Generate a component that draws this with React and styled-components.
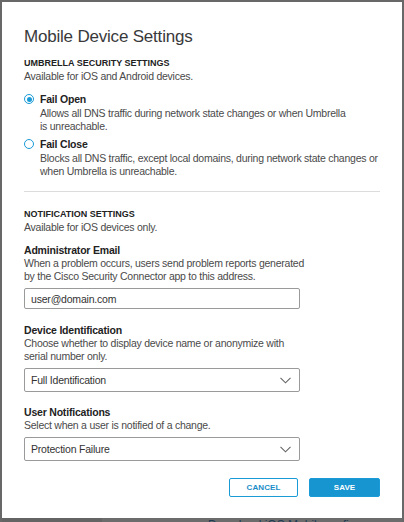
import React from 'react';
import styled, { createGlobalStyle } from 'styled-components';

const GlobalStyle = createGlobalStyle`
    * {
        margin: 0;
        padding: 0;
        box-sizing: border-box;
    }

    body {
        background: #686868;
        font-family: "Liberation Sans", Arial, sans-serif;
        color: #3a3a3c;
    }
`;

const Screen = styled.div`
    width: 404px;
    height: 522px;
    overflow: hidden;
    padding: 2px 2px 0 2px;
`;

const Dialog = styled.div`
    width: 400px;
    height: 516px;
    background: #fff;
    padding: 24px 22px 0 22px;
`;

const Title = styled.h1`
    font-size: 17px;
    font-weight: normal;
    letter-spacing: -0.2px;
    line-height: 22px;
    color: #39393b;
    margin-bottom: 9px;
`;

const SectionHeading = styled.h2`
    font-size: 9px;
    font-weight: bold;
    line-height: 13px;
    color: #222;
`;

const Help = styled.p`
    font-size: 10.5px;
    letter-spacing: -0.25px;
    line-height: 13px;
    color: #4a4a4a;
`;

const RadioList = styled.div`
    display: flex;
    flex-direction: column;
    gap: 5px;
    margin-top: 10px;
`;

const RadioRow = styled.label`
    display: grid;
    grid-template-columns: 16px 1fr;
`;

const RadioDot = styled.span`
    width: 10px;
    height: 10px;
    margin-top: 1px;
    border-radius: 50%;
    border: 1.5px solid #1a9bd7;
    display: flex;
    align-items: center;
    justify-content: center;

    &::after {
        content: '';
        width: 5px;
        height: 5px;
        border-radius: 50%;
        background: ${p => (p.$checked ? '#1a9bd7' : 'transparent')};
    }
`;

const RadioLabel = styled.div`
    font-size: 10.5px;
    font-weight: bold;
    letter-spacing: -0.2px;
    line-height: 13px;
    color: #222;
    margin-bottom: 1px;
`;

const Divider = styled.hr`
    border: none;
    border-top: 1px solid #dcdcdc;
    margin: 13px 0 16px 0;
`;

const FieldLabel = styled.div`
    font-size: 10.5px;
    font-weight: bold;
    letter-spacing: -0.2px;
    line-height: 13px;
    color: #222;
`;

const Field = styled.div`
    margin-top: ${p => p.$top}px;
`;

const TextInput = styled.div`
    width: 276px;
    height: 21px;
    margin-top: 5px;
    border: 1px solid #9a9a9a;
    border-radius: 2px;
    padding: 0 6px;
    display: flex;
    align-items: center;
    font-size: 10.5px;
    letter-spacing: -0.2px;
    color: #333;
`;

const Select = styled.div`
    width: 276px;
    height: 24px;
    margin-top: 5px;
    border: 1px solid #9a9a9a;
    border-radius: 2px;
    padding: 0 8px 0 6px;
    display: flex;
    align-items: center;
    justify-content: space-between;
    font-size: 10.5px;
    letter-spacing: -0.2px;
    color: #333;
`;

const Footer = styled.div`
    display: flex;
    justify-content: flex-end;
    gap: 11px;
    margin-top: 17px;
`;

const Button = styled.button`
    height: 19px;
    width: ${p => p.$w}px;
    border-radius: 2px;
    font-family: inherit;
    font-size: 8px;
    font-weight: bold;
    letter-spacing: 0.1px;
    text-transform: uppercase;
    border: 1px solid #1a9bd7;
    background: ${p => (p.$primary ? '#1795d1' : '#fff')};
    color: ${p => (p.$primary ? '#fff' : '#1a8dc8')};
`;

const Behind = styled.div`
    height: 4px;
    display: flex;
    overflow: hidden;
`;

const BehindNav = styled.div`
    width: 100px;
    background: #646464;
`;

const BehindMain = styled.div`
    flex: 1;
    background: #6c6c6c;
    padding-left: 106px;
    font-size: 12px;
    line-height: 14px;
    color: #1d3a52;
`;

const Chevron = () => (
    <svg width="11" height="7" viewBox="0 0 11 7" fill="none">
        <path d="M0.5 0.8 L5.5 5.8 L10.5 0.8" stroke="#666" strokeWidth="1.1" />
    </svg>
);

const Radio = ({ checked, label, children }) => (
    <RadioRow>
        <RadioDot $checked={checked} />
        <div>
            <RadioLabel>{label}</RadioLabel>
            <Help>{children}</Help>
        </div>
    </RadioRow>
);

const App = () => {
    return (
        <Screen>
            <GlobalStyle />
            <Dialog>
                <Title>Mobile Device Settings</Title>
                <section>
                    <SectionHeading>UMBRELLA SECURITY SETTINGS</SectionHeading>
                    <Help>Available for iOS and Android devices.</Help>
                    <RadioList>
                        <Radio checked label="Fail Open">
                            Allows all DNS traffic during network state changes or when Umbrella<br />is unreachable.
                        </Radio>
                        <Radio label="Fail Close">
                            Blocks all DNS traffic, except local domains, during network state changes or<br />when Umbrella is unreachable.
                        </Radio>
                    </RadioList>
                </section>
                <Divider />
                <section>
                    <SectionHeading>NOTIFICATION SETTINGS</SectionHeading>
                    <Help>Available for iOS devices only.</Help>
                    <Field $top={10}>
                        <FieldLabel>Administrator Email</FieldLabel>
                        <Help>When a problem occurs, users send problem reports generated<br />by the Cisco Security Connector app to this address.</Help>
                        <TextInput>user@domain.com</TextInput>
                    </Field>
                    <Field $top={15}>
                        <FieldLabel>Device Identification</FieldLabel>
                        <Help>Choose whether to display device name or anonymize with<br />serial number only.</Help>
                        <Select>Full Identification<Chevron /></Select>
                    </Field>
                    <Field $top={14}>
                        <FieldLabel>User Notifications</FieldLabel>
                        <Help>Select when a user is notified of a change.</Help>
                        <Select>Protection Failure<Chevron /></Select>
                    </Field>
                </section>
                <Footer>
                    <Button $w={69}>Cancel</Button>
                    <Button $primary $w={71}>Save</Button>
                </Footer>
            </Dialog>
            <Behind>
                <BehindNav />
                <BehindMain>Download iOS Mobileconfig</BehindMain>
            </Behind>
        </Screen>
    );
};

export default App;
